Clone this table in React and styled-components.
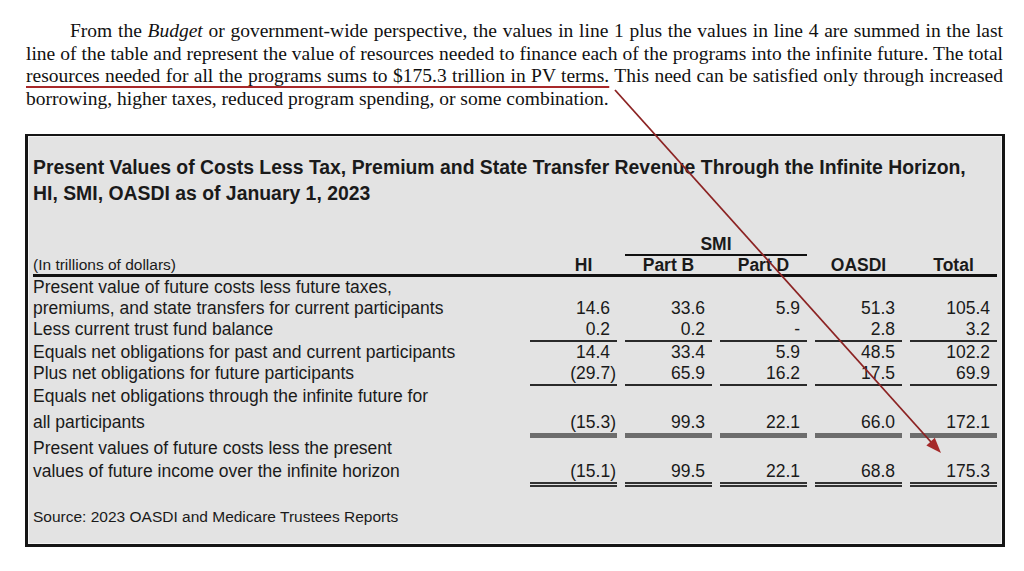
import React from "react";
import styled, { createGlobalStyle } from "styled-components";

const GlobalStyle = createGlobalStyle`
  body {
    margin: 0;
    background: #fff;
  }
`;

const rows = [
  { label: "Present value of future costs less future taxes," },
  {
    label: "premiums, and state transfers for current participants",
    values: ["14.6", "33.6", "5.9", "51.3", "105.4"],
  },
  {
    label: "Less current trust fund balance",
    values: ["0.2", "0.2", "-", "2.8", "3.2"],
    rule: "single",
  },
  {
    label: "Equals net obligations for past and current participants",
    values: ["14.4", "33.4", "5.9", "48.5", "102.2"],
  },
  {
    label: "Plus net obligations for future participants",
    values: ["(29.7)", "65.9", "16.2", "17.5", "69.9"],
    rule: "single",
  },
  { label: "Equals net obligations through the infinite future for" },
  {
    label: "all participants",
    values: ["(15.3)", "99.3", "22.1", "66.0", "172.1"],
    rule: "heavy",
    pt: 5,
  },
  { label: "Present values of future costs less the present" },
  {
    label: "values of future income over the infinite horizon",
    values: ["(15.1)", "99.5", "22.1", "68.8", "175.3"],
    rule: "double",
    pt: 2,
  },
];

const rules = {
  single: "2px solid #2a2a2a",
  heavy: "5px solid #6d6d6d",
  double: "5px double #333",
};

const App = () => {
  return (
    <>
      <GlobalStyle />
      <Page>
        <Para>
          <Line $indent>
            From the <i>Budget</i> or government-wide perspective, the values in
            line 1 plus the values in line 4 are summed in the last
          </Line>
          <Line>
            line of the table and represent the value of resources needed to
            finance each of the programs into the infinite future. The total
          </Line>
          <Line>
            <Marked>
              resources needed for all the programs sums to $175.3 trillion in PV
              terms.
            </Marked>{" "}
            This need can be satisfied only through increased
          </Line>
          <Line $last>
            borrowing, higher taxes, reduced program spending, or some
            combination.
          </Line>
        </Para>

        <Box>
          <Title>
            Present Values of Costs Less Tax, Premium and State Transfer Revenue
            Through the Infinite Horizon,
            <br />
            HI, SMI, OASDI as of January 1, 2023
          </Title>

          <SmiRow>
            <SmiCell>SMI</SmiCell>
          </SmiRow>
          <HeadRow>
            <Units>(In trillions of dollars)</Units>
            <HeadCell $shift={20}>HI</HeadCell>
            <HeadCell>Part B</HeadCell>
            <HeadCell>Part D</HeadCell>
            <HeadCell>OASDI</HeadCell>
            <HeadCell>Total</HeadCell>
          </HeadRow>

          {rows.map((r) => (
            <Row key={r.label} $pt={r.pt}>
              <div>{r.label}</div>
              {r.values &&
                r.values.map((v, i) => (
                  <Value key={i} $neg={v.startsWith("(")} $rule={r.rule}>
                    {v}
                  </Value>
                ))}
            </Row>
          ))}

          <Source>Source: 2023 OASDI and Medicare Trustees Reports</Source>
        </Box>

        <Overlay width="1024" height="571" viewBox="0 0 1024 571">
          <line
            x1="615"
            y1="90"
            x2="931"
            y2="442"
            stroke="#8c2323"
            strokeWidth="1.8"
          />
          <polygon points="941,453 926.4,445.4 934.8,437.8" fill="#a52a2a" />
        </Overlay>
      </Page>
    </>
  );
};

const Page = styled.div`
  position: relative;
  width: 1024px;
  height: 571px;
  overflow: hidden;
  padding-top: 20px;
  box-sizing: border-box;
`;

const Para = styled.p`
  margin: 0 0 0 26px;
  width: 977px;
  font-family: "Liberation Serif", "Times New Roman", serif;
  font-size: 19.5px;
  line-height: 22.5px;
  color: #111;
`;

const Line = styled.span`
  display: block;
  text-align: justify;
  text-align-last: ${(p) => (p.$last ? "left" : "justify")};
  text-indent: ${(p) => (p.$indent ? "44px" : "0")};
`;

const Marked = styled.span`
  text-decoration: underline;
  text-decoration-color: #a8282a;
  text-decoration-thickness: 2px;
  text-underline-offset: 4px;
`;

const Box = styled.div`
  margin: 24px 0 0 25px;
  width: 980px;
  box-sizing: border-box;
  border: 3px solid #151515;
  border-top-width: 2px;
  background: #e3e3e3;
  box-shadow: inset 0 0 0 1px #f2f2f2;
  padding: 18px 5px 18px;
  font-family: "Liberation Sans", Arial, sans-serif;
  color: #1a1a1a;
`;

const Title = styled.h1`
  margin: 0;
  font-size: 19.4px;
  line-height: 26px;
  font-weight: bold;
`;

const Row = styled.div`
  display: grid;
  grid-template-columns: 1fr repeat(5, 87px);
  column-gap: 8px;
  align-items: start;
  font-size: 17.5px;
  line-height: 21px;
  padding-top: ${(p) => p.$pt || 0}px;
`;

const SmiRow = styled(Row)`
  margin-top: 28px;
  font-weight: bold;
  line-height: 20px;
`;

const SmiCell = styled.div`
  grid-column: 3 / 5;
  text-align: center;
  border-bottom: 2px solid #111;
`;

const HeadRow = styled(Row)`
  align-items: end;
  font-weight: bold;
  line-height: 18px;
  border-bottom: 3px solid #111;
`;

const Units = styled.div`
  font-size: 15.5px;
  font-weight: normal;
  line-height: 18px;
`;

const HeadCell = styled.div`
  text-align: center;
  padding-left: ${(p) => p.$shift || 0}px;
`;

const Value = styled.div`
  text-align: right;
  padding-right: ${(p) => (p.$neg ? 1 : 7)}px;
  border-bottom: ${(p) => (p.$rule ? rules[p.$rule] : "none")};
`;

const Source = styled.p`
  margin: 21px 0 0;
  font-size: 15.5px;
  line-height: 18px;
`;

const Overlay = styled.svg`
  position: absolute;
  top: 0;
  left: 0;
  pointer-events: none;
`;

export default App;
